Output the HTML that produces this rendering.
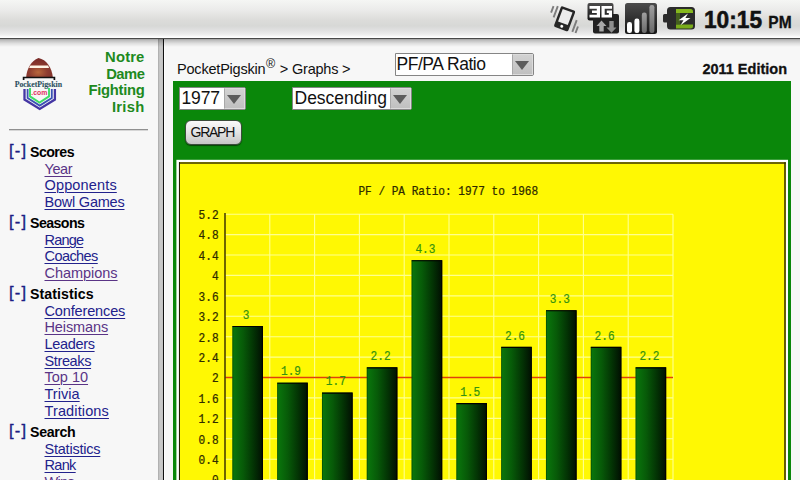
<!DOCTYPE html>
<html>
<head>
<meta charset="utf-8">
<style>
*{box-sizing:border-box;margin:0;padding:0}
html,body{width:800px;height:480px;overflow:hidden;background:#f7f7f7;font-family:"Liberation Sans",sans-serif;}
#root{position:relative;width:800px;height:480px;overflow:hidden;background:#f7f7f7}
.abs{position:absolute}
#status{left:0;top:0;width:800px;height:39px;background:linear-gradient(#f5f6f4 0px,#ebebea 10px,#dcdcda 20px,#d7d8d6 26px,#e0e0e0 30px,#ececec 34px,#f6f6f6 36px,#ffffff 37px,#ffffff 38px);border-bottom:1px solid #4a4a4a;z-index:10}
#sshadow{left:0;top:39px;width:800px;height:8px;background:linear-gradient(rgba(0,0,0,.34),rgba(0,0,0,.22) 20%,rgba(0,0,0,.10) 55%,rgba(0,0,0,0));z-index:9}
#icons{z-index:11}
#left{left:0;top:39px;width:159px;height:441px;background:#f7f7f7}
#fborder{left:158px;top:39px;width:7px;height:441px;background:linear-gradient(90deg,#a0a0a0 0,#c2c2c2 1px,#cacaca 3px,#c0c0c0 5px,#111 5px,#111 6px,#fdfdfd 6px,#fdfdfd 7px)}
#team{left:59.5px;top:49px;width:85px;text-align:right;color:#1e8a1e;font-weight:bold;font-size:14.8px;line-height:16.6px}
#hr{left:9px;top:129px;width:139px;height:2px;background:linear-gradient(#909090 0,#909090 1px,#d6d6d6 1px)}
.h{position:absolute;left:30px;font-size:14.2px;line-height:17px;font-weight:bold;color:#000;white-space:nowrap}
.h span{position:absolute;left:-21px;top:-2.1px;font-weight:normal;font-size:16.5px;letter-spacing:1.2px;color:#1c1c84;-webkit-text-stroke:0.35px #1c1c84}
.l{position:absolute;left:44.5px;font-size:14.5px;line-height:17px;color:#22228c;text-decoration:underline;text-underline-offset:2px;text-decoration-thickness:1px;white-space:nowrap}
.v{color:#5a3486}
#crumb{left:177px;top:60.7px;letter-spacing:-0.2px;font-size:14.5px;line-height:17px;color:#111;white-space:nowrap}
#crumb sup{font-size:12.5px;line-height:0;position:relative;top:0.3px;vertical-align:super;margin:0 1px 0 0.5px}
#edition{right:13px;top:60.9px;-webkit-text-stroke:0.3px #111;font-size:14.5px;line-height:17px;font-weight:bold;color:#111;white-space:nowrap}
.sel{position:absolute;height:23px;background:#fff;border:1px solid #858585;border-radius:0 2px 2px 0;font-size:17.5px;line-height:21.6px;color:#111;padding-left:1.5px;white-space:nowrap;overflow:hidden;z-index:2}
.sel i{position:absolute;right:0;top:0;width:21.5px;height:21px;background:linear-gradient(#d2d2d2,#c0c0c0);border:1px solid #dcdcdc;border-left:1px solid #a8a8a8}
.sel i:after{content:"";position:absolute;left:2.4px;top:6.2px;border-left:7px solid transparent;border-right:7px solid transparent;border-top:9.8px solid #5c5c5c}
#green{left:173px;top:81px;width:618px;height:400px;background:#0a870a}
#btn{left:185px;top:120px;width:57px;height:25px;border-radius:6px;background:linear-gradient(#fafafa,#e6e6e6 45%,#c6c6c6);border:1px solid #3c4c3c;box-shadow:0 1px 1px rgba(0,0,0,.5);font-size:14px;letter-spacing:-1.25px;line-height:23px;text-align:center;color:#111;z-index:2;padding-right:2.4px}
.yl{font-family:"Liberation Mono",monospace;font-size:12.6px;fill:#2e2a00;stroke:#2e2a00;stroke-width:0.25px}
.bl{font-family:"Liberation Mono",monospace;font-size:12.4px;fill:#34920f;stroke:#34920f;stroke-width:0.2px}
</style>
</head>
<body>
<div id="root">
<div id="status" class="abs"></div>
<div id="sshadow" class="abs"></div>
<svg id="icons" class="abs" style="left:0;top:0" width="800" height="39" viewBox="0 0 800 39">
<defs>
<linearGradient id="dk" x1="0" x2="0" y1="0" y2="1"><stop offset="0" stop-color="#4c4c4c"/><stop offset="0.5" stop-color="#303030"/><stop offset="1" stop-color="#161616"/></linearGradient>
<linearGradient id="gb" x1="0" x2="0" y1="0" y2="1"><stop offset="0" stop-color="#a0a0a0"/><stop offset="1" stop-color="#6a6a6a"/></linearGradient>
</defs>
<!-- vibrate -->
<g transform="translate(564.6 18.8) rotate(20.5)">
<rect x="-7.6" y="-11" width="15.2" height="22" rx="1.6" fill="#262626"/>
<rect x="-5.2" y="-8.6" width="10.4" height="13.4" fill="#ebebeb"/>
<circle cx="0" cy="8" r="1.5" fill="#fff"/>
<path d="M-10.8 -9.5V2.5M-14.8 -8V-1M11.8 -3V9.5M15.2 2.5V9.5" stroke="#7c7c7c" stroke-width="1.9" fill="none"/>
</g>
<!-- 3G -->
<rect x="587.5" y="3" width="26" height="17.5" rx="2" fill="url(#dk)"/>
<rect x="593" y="14" width="26" height="19.5" rx="2" fill="#222"/>
<path d="M589.5 6H600V17.5H589.5V14.7H596.8V13.1H592V10.4H596.8V8.8H589.5ZM601.5 6H612V8.8H604.7V14.7H608.8V13.1H606.8V10.4H612V17.5H601.5Z" fill="#fff"/>
<path d="M601.5 20.5l5 5.4h-2.8v5.6h-4.4v-5.6h-2.8z" fill="#a8a8a8"/>
<path d="M611.5 32.8l5 -5.4h-2.8v-6.4h-4.4v6.4h-2.8z" fill="#8e8e8e"/>
<!-- signal -->
<rect x="625" y="3" width="32" height="31" rx="2.5" fill="url(#dk)"/>
<rect x="627" y="22" width="5" height="11" rx="2.3" fill="#fff"/>
<rect x="634.4" y="18.6" width="5" height="14.4" rx="2.3" fill="#fff"/>
<rect x="641.8" y="12.6" width="5" height="20.4" rx="2.3" fill="url(#gb)"/>
<rect x="649.4" y="5" width="5" height="28" rx="2.3" fill="url(#gb)"/>
<!-- battery -->
<path d="M663 15.5q0-1.5 1.5-1.5h2.5v-3.5q0-3.5 3.5-3.5h21q3.500 0 3.500 3.500v15.500q0 3.500-3.500 3.500h-21q-3.500 0-3.500-3.500v-3.500h-2.500q-1.500 0-1.500-1.500z" fill="#2b2b2b"/>
<path d="M676 9h14.500q2.500 0 2.500 2.500v1.500h-17z" fill="#86b81e"/>
<path d="M676 24.500h17v1.500q0 2.500-2.500 2.500h-14.500z" fill="#79ab1a"/>
<rect x="676" y="13" width="4" height="11.500" fill="#5a8a14" opacity="0.55"/>
<path d="M688 13.400l-9.400 6.900h4.900l-3 5 10-7.300h-5.100z" fill="#fff"/>
<!-- time -->
<text x="704" y="27.800" font-family="Liberation Sans, sans-serif" font-weight="bold" font-size="23.300" fill="#111" stroke="#111" stroke-width="0.55" textLength="58.000" lengthAdjust="spacingAndGlyphs">10:15</text>
<text x="768.300" y="27.800" font-family="Liberation Sans, sans-serif" font-weight="bold" font-size="16.500" fill="#111" stroke="#111" stroke-width="0.3" textLength="23.300" lengthAdjust="spacingAndGlyphs">PM</text>
</svg>
<div id="left" class="abs"></div>
<div id="fborder" class="abs"></div>
<svg id="logo" class="abs" style="left:8px;top:50px" width="64" height="64" viewBox="8 50 64 64">
<defs>
<radialGradient id="fb" cx="0.45" cy="0.75" r="0.7"><stop offset="0" stop-color="#b8683c"/><stop offset="0.5" stop-color="#8e3c30"/><stop offset="1" stop-color="#7a2c28"/></radialGradient>
</defs>
<path d="M26.200 77c0.500-8 5-16.500 12.300-19 8 1.500 13.500 10 14.300 19z" fill="url(#fb)"/>
<path d="M30.300 65.400h17.800l1 2.600h-20z" fill="#fff4e4"/>
<path d="M23.600 80v-2.500h30.800v2.500" stroke="#111" stroke-width="1.700" fill="none"/>
<path d="M24.500 89v10.500l15.200 9.500 15.200-9.500v-10.500" stroke="#4436a4" stroke-width="2.300" fill="none"/>
<path d="M27.600 89v9l12.100 7.600 12.100-7.600v-9" stroke="#3a52b4" stroke-width="1.800" fill="none"/>
<path d="M30 88v8.400l9.500 6.100 9.500-6.100v-8.400" stroke="#3edc66" stroke-width="1.900" fill="none"/>
<text x="14.700" y="87.400" font-family="Liberation Serif, serif" font-weight="bold" font-size="8.400" fill="#274856" stroke="#5a8494" stroke-width="0.150" textLength="47.300" lengthAdjust="spacingAndGlyphs">PocketPigskin</text>
<text x="31.300" y="94.800" font-family="Liberation Sans, sans-serif" font-weight="bold" font-size="7.400" fill="#e2305c" textLength="16" lengthAdjust="spacingAndGlyphs">.com</text>
</svg>
<div id="team" class="abs"><span style="letter-spacing:.15px">Notre</span><br><span style="letter-spacing:-.5px">Dame</span><br><span style="letter-spacing:-.29px">Fighting</span><br><span style="letter-spacing:.25px">Irish</span></div>
<div id="hr" class="abs"></div>
<div class="h" style="top:144px;letter-spacing:-0.56px"><span>[-]</span>Scores</div>
<div class="l v" style="top:161px;letter-spacing:-0.40px">Year</div>
<div class="l" style="top:177px;letter-spacing:0.15px">Opponents</div>
<div class="l" style="top:194px;letter-spacing:-0.22px">Bowl Games</div>
<div class="h" style="top:215px;letter-spacing:-0.57px"><span>[-]</span>Seasons</div>
<div class="l" style="top:232px;letter-spacing:-0.80px">Range</div>
<div class="l" style="top:248px;letter-spacing:-0.57px">Coaches</div>
<div class="l v" style="top:265px;letter-spacing:-0.03px">Champions</div>
<div class="h" style="top:286px;letter-spacing:0.07px"><span>[-]</span>Statistics</div>
<div class="l" style="top:303px;letter-spacing:-0.14px">Conferences</div>
<div class="l v" style="top:319px;letter-spacing:-0.11px">Heismans</div>
<div class="l" style="top:336px;letter-spacing:-0.33px">Leaders</div>
<div class="l" style="top:353px;letter-spacing:-0.37px">Streaks</div>
<div class="l v" style="top:369px">Top 10</div>
<div class="l" style="top:386px;letter-spacing:0.04px">Trivia</div>
<div class="l" style="top:403px;letter-spacing:0.13px">Traditions</div>
<div class="h" style="top:424px;letter-spacing:-0.32px"><span>[-]</span>Search</div>
<div class="l" style="top:441px;letter-spacing:-0.22px">Statistics</div>
<div class="l" style="top:457px;letter-spacing:-0.67px">Rank</div>
<div class="l v" style="top:474px;letter-spacing:-0.67px">Wins</div>
<div id="crumb" class="abs">PocketPigskin<sup>&reg;</sup> &gt; Graphs &gt;</div>
<div id="edition" class="abs">2011 Edition</div>
<div class="sel" style="left:395px;top:52px;width:139px;letter-spacing:-0.45px;line-height:21px;top:52.5px;padding-left:0.5px">PF/PA Ratio<i></i></div>
<div id="green" class="abs"></div>
<div class="sel" style="left:179px;top:87px;width:67px;letter-spacing:-0.15px">1977<i></i></div>
<div class="sel" style="left:292px;top:87px;width:120px">Descending<i></i></div>
<div id="btn" class="abs">GRAPH</div>
<svg class="abs" style="left:0;top:0;z-index:3" width="800" height="480" viewBox="0 0 800 480">
<defs><linearGradient id="bg" x1="0" x2="1" y1="0" y2="0"><stop offset="0" stop-color="#0a780c"/><stop offset="0.35" stop-color="#075a08"/><stop offset="0.7" stop-color="#033204"/><stop offset="1" stop-color="#010e02"/></linearGradient></defs>
<rect x="176.4" y="159.8" width="611.6" height="330" fill="#fff"/>
<rect x="179" y="162.2" width="606.8" height="330" fill="#fff803"/>
<path d="M179 163H785.8" stroke="#3c3600" stroke-width="1.6" fill="none"/>
<path d="M785 162.2V490" stroke="#3c3600" stroke-width="1.6" fill="none"/>
<path d="M179.45 162.2V490" stroke="#141000" stroke-width="1" fill="none"/>
<path d="M225.0 479.6H673.0M225.0 459.2H673.0M225.0 438.8H673.0M225.0 418.4H673.0M225.0 397.9H673.0M225.0 377.5H673.0M225.0 357.1H673.0M225.0 336.7H673.0M225.0 316.3H673.0M225.0 295.9H673.0M225.0 275.4H673.0M225.0 255.0H673.0M225.0 234.6H673.0M225.0 214.2H673.0M269.8 214.2V481M314.6 214.2V481M359.4 214.2V481M404.2 214.2V481M449.0 214.2V481M493.8 214.2V481M538.6 214.2V481M583.4 214.2V481M628.2 214.2V481M673.0 214.2V481" stroke="#ffff90" stroke-width="1.1" fill="none"/>
<path d="M225.0 377.5H673.0" stroke="#e0400a" stroke-width="1.3"/>
<path d="M225.0 213.0V481" stroke="#4a4000" stroke-width="1.6"/>
<rect x="232.4" y="326.0" width="30.6" height="164.0" fill="url(#bg)"/>
<path d="M232.4 326.5H262.4V490" fill="none" stroke="#000" stroke-width="1.1"/>
<path d="M232.8 327.0V490" fill="none" stroke="#003000" stroke-opacity="0.6" stroke-width="0.8"/>
<g transform="translate(246.2 318.7) scale(0.896 1)"><text class="bl" text-anchor="middle">3</text></g>
<rect x="277.2" y="382.6" width="30.6" height="107.4" fill="url(#bg)"/>
<path d="M277.2 383.2H307.2V490" fill="none" stroke="#000" stroke-width="1.1"/>
<path d="M277.6 383.6V490" fill="none" stroke="#003000" stroke-opacity="0.6" stroke-width="0.8"/>
<g transform="translate(291.0 375.3) scale(0.896 1)"><text class="bl" text-anchor="middle">1.9</text></g>
<rect x="322.0" y="392.6" width="30.6" height="97.4" fill="url(#bg)"/>
<path d="M322.0 393.1H352.1V490" fill="none" stroke="#000" stroke-width="1.1"/>
<path d="M322.4 393.6V490" fill="none" stroke="#003000" stroke-opacity="0.6" stroke-width="0.8"/>
<g transform="translate(335.8 385.3) scale(0.896 1)"><text class="bl" text-anchor="middle">1.7</text></g>
<rect x="366.8" y="367.3" width="30.6" height="122.7" fill="url(#bg)"/>
<path d="M366.8 367.9H396.8V490" fill="none" stroke="#000" stroke-width="1.1"/>
<path d="M367.2 368.3V490" fill="none" stroke="#003000" stroke-opacity="0.6" stroke-width="0.8"/>
<g transform="translate(380.6 360.0) scale(0.896 1)"><text class="bl" text-anchor="middle">2.2</text></g>
<rect x="411.6" y="260.1" width="30.6" height="229.9" fill="url(#bg)"/>
<path d="M411.6 260.7H441.7V490" fill="none" stroke="#000" stroke-width="1.1"/>
<path d="M412.0 261.1V490" fill="none" stroke="#003000" stroke-opacity="0.6" stroke-width="0.8"/>
<g transform="translate(425.4 252.8) scale(0.896 1)"><text class="bl" text-anchor="middle">4.3</text></g>
<rect x="456.4" y="403.0" width="30.6" height="87.0" fill="url(#bg)"/>
<path d="M456.4 403.6H486.4V490" fill="none" stroke="#000" stroke-width="1.1"/>
<path d="M456.8 404.0V490" fill="none" stroke="#003000" stroke-opacity="0.6" stroke-width="0.8"/>
<g transform="translate(470.2 395.7) scale(0.896 1)"><text class="bl" text-anchor="middle">1.5</text></g>
<rect x="501.2" y="346.9" width="30.6" height="143.1" fill="url(#bg)"/>
<path d="M501.2 347.4H531.2V490" fill="none" stroke="#000" stroke-width="1.1"/>
<path d="M501.6 347.9V490" fill="none" stroke="#003000" stroke-opacity="0.6" stroke-width="0.8"/>
<g transform="translate(515.0 339.6) scale(0.896 1)"><text class="bl" text-anchor="middle">2.6</text></g>
<rect x="546.0" y="310.2" width="30.6" height="179.8" fill="url(#bg)"/>
<path d="M546.0 310.7H576.0V490" fill="none" stroke="#000" stroke-width="1.1"/>
<path d="M546.4 311.2V490" fill="none" stroke="#003000" stroke-opacity="0.6" stroke-width="0.8"/>
<g transform="translate(559.8 302.9) scale(0.896 1)"><text class="bl" text-anchor="middle">3.3</text></g>
<rect x="590.8" y="346.9" width="30.6" height="143.1" fill="url(#bg)"/>
<path d="M590.8 347.4H620.8V490" fill="none" stroke="#000" stroke-width="1.1"/>
<path d="M591.2 347.9V490" fill="none" stroke="#003000" stroke-opacity="0.6" stroke-width="0.8"/>
<g transform="translate(604.6 339.6) scale(0.896 1)"><text class="bl" text-anchor="middle">2.6</text></g>
<rect x="635.6" y="367.3" width="30.6" height="122.7" fill="url(#bg)"/>
<path d="M635.6 367.9H665.6V490" fill="none" stroke="#000" stroke-width="1.1"/>
<path d="M636.0 368.3V490" fill="none" stroke="#003000" stroke-opacity="0.6" stroke-width="0.8"/>
<g transform="translate(649.4 360.0) scale(0.896 1)"><text class="bl" text-anchor="middle">2.2</text></g>
<g transform="translate(218.6 484.4) scale(0.882 1)"><text class="yl" text-anchor="end">0</text></g>
<g transform="translate(218.6 464.0) scale(0.882 1)"><text class="yl" text-anchor="end">0.4</text></g>
<g transform="translate(218.6 443.6) scale(0.882 1)"><text class="yl" text-anchor="end">0.8</text></g>
<g transform="translate(218.6 423.2) scale(0.882 1)"><text class="yl" text-anchor="end">1.2</text></g>
<g transform="translate(218.6 402.7) scale(0.882 1)"><text class="yl" text-anchor="end">1.6</text></g>
<g transform="translate(218.6 382.3) scale(0.882 1)"><text class="yl" text-anchor="end">2</text></g>
<g transform="translate(218.6 361.9) scale(0.882 1)"><text class="yl" text-anchor="end">2.4</text></g>
<g transform="translate(218.6 341.5) scale(0.882 1)"><text class="yl" text-anchor="end">2.8</text></g>
<g transform="translate(218.6 321.1) scale(0.882 1)"><text class="yl" text-anchor="end">3.2</text></g>
<g transform="translate(218.6 300.7) scale(0.882 1)"><text class="yl" text-anchor="end">3.6</text></g>
<g transform="translate(218.6 280.2) scale(0.882 1)"><text class="yl" text-anchor="end">4</text></g>
<g transform="translate(218.6 259.8) scale(0.882 1)"><text class="yl" text-anchor="end">4.4</text></g>
<g transform="translate(218.6 239.4) scale(0.882 1)"><text class="yl" text-anchor="end">4.8</text></g>
<g transform="translate(218.6 219.0) scale(0.882 1)"><text class="yl" text-anchor="end">5.2</text></g>
<g transform="translate(448.3 194.8) scale(0.882 1)"><text class="yl" text-anchor="middle">PF / PA Ratio: 1977 to 1968</text></g>
</svg>
</div>
</body>
</html>
